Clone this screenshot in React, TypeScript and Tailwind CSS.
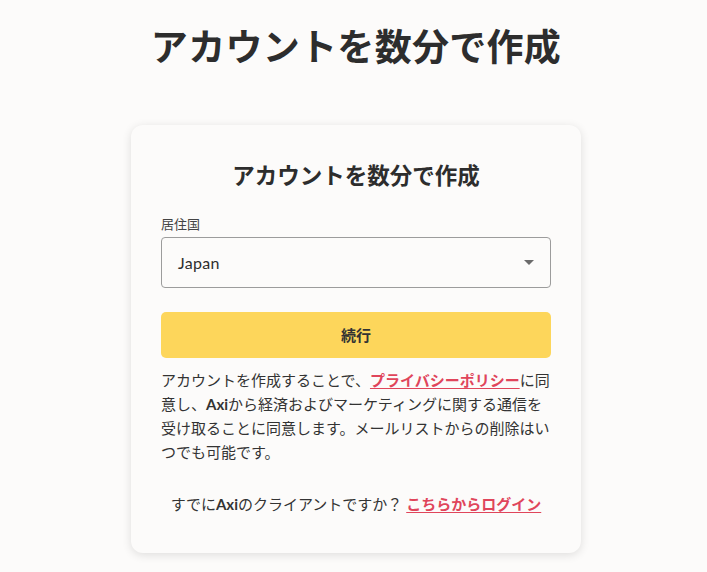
import React from "react";

const font = {
  fontFamily: '"Lato", "Noto Sans CJK JP", sans-serif',
};

export default function App() {
  return (
    <div
      className="min-h-[572px] w-full bg-[#fcfbfa] text-[#2f2f2f] flex flex-col items-center pl-[5px]"
      style={font}
    >
      <h1 className="mt-[23px] text-[37px] leading-[48px] font-bold tracking-[0.3px] text-[#2d2d2d]">
        アカウントを数分で作成
      </h1>

      <div className="mt-[54px] w-[450px] rounded-xl bg-[#fcfbfa] shadow-[0_2px_10px_rgba(0,0,0,0.12)] px-[30px] pt-[35px] pb-[37px]">
        <h2 className="text-center text-[22.5px] leading-[32px] font-bold text-[#2d2d2d]">
          アカウントを数分で作成
        </h2>

        <label className="mt-[23px] block text-[13px] leading-[18px] text-[#444]">
          居住国
        </label>
        <div className="mt-[4px] h-[51px] rounded-[4px] border border-[#9c9c9c] flex items-center justify-between pl-[16px] pr-[15px]">
          <span className="text-[16px] text-[#2d2d2d] tracking-[0.3px]">Japan</span>
          <svg width="10" height="5" viewBox="0 0 10 5" className="mr-[1px]">
            <path d="M0 0 L10 0 L5 5 Z" fill="#6b6b6b" />
          </svg>
        </div>

        <button className="mt-[24px] h-[46px] w-full rounded-[5px] bg-[#fdd65b] text-[15px] font-bold text-[#333]">
          続行
        </button>

        <p className="mt-[10px] text-[15px] leading-[24px] text-[#333]">
          アカウントを作成することで、
          <a className="font-bold text-[#e0455b] underline underline-offset-2">
            プライバシーポリシー
          </a>
          に同意し、<span className="font-bold">Axi</span>
          から経済およびマーケティングに関する通信を受け取ることに同意します。メールリストからの削除はいつでも可能です。
        </p>

        <p className="mt-[28px] text-center text-[15px] leading-[24px] text-[#333]">
          すでに<span className="font-bold">Axi</span>のクライアントですか？{" "}
          <a className="font-bold text-[#e0455b] underline underline-offset-2">
            こちらからログイン
          </a>
        </p>
      </div>
    </div>
  );
}
